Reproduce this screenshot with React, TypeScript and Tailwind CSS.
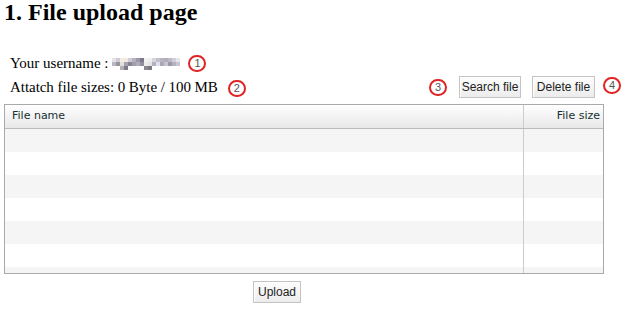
/**
 * FileUploadPage — upload form with attached-file list and numbered callouts.
 */

const BLUR_ROWS: string[][] = [
  ['#e4e2e8', '#cfcbd3', '#f2eee6', '#efe9de', '#cfccd6', '#b4b0bf', '#9c98a9', '#7c7888', '#f2f2f2', '#eeeeee', '#d8d4dc', '#c4c0cb', '#b7b3c0', '#b1adba', '#bfbac5', '#d2cfd8', '#e8e6ec'],
  ['#b8b5be', '#9794a0', '#e6e0d4', '#a6a3b0', '#878393', '#a19eac', '#b0adba', '#918d9c', '#ececec', '#e4e4e4', '#b5b2bd', '#dbe3ec', '#aba7b4', '#c9c5cf', '#9c98a6', '#b5b1bd', '#cac6d0'],
  ['#ffffff', '#ffffff', '#b2afb8', '#7e7b85', '#ffffff', '#ffffff', '#ffffff', '#ffffff', '#8a8791', '#7c7983', '#ffffff', '#ffffff', '#ffffff', '#ffffff', '#ffffff', '#ffffff', '#ffffff'],
];

const ROWS = [0, 1, 2, 3, 4, 5, 6];

function Callout({ n }: { n: number }) {
  return (
    <span className="inline-flex w-[18px] h-[17px] shrink-0 items-center justify-center rounded-full border-2 border-[#e02424] text-[11px] leading-none text-[#555] font-['Liberation_Sans',sans-serif]">
      {n}
    </span>
  );
}

function Btn({ label, className }: { label: string; className?: string }) {
  return (
    <button
      type="button"
      className={
        'h-[22px] border border-[#c4c4c4] bg-gradient-to-b from-[#fdfdfd] to-[#ececec] text-[12px] text-[#222] font-[\'Liberation_Sans\',sans-serif] leading-none shadow-[inset_1px_1px_0_#fff] ' +
        (className ?? '')
      }
    >
      {label}
    </button>
  );
}

function BlurredName() {
  return (
    <span className="inline-flex flex-col">
      {BLUR_ROWS.map((row, r) => (
        <span key={r} className="flex">
          {row.map((c, i) => (
            <span key={i} className="w-[4px] h-[4px]" style={{ backgroundColor: c }} />
          ))}
        </span>
      ))}
    </span>
  );
}

export default function App() {
  return (
    <div className="w-[628px] h-[310px] bg-white overflow-hidden font-['Liberation_Serif',serif] text-black">
      <h2 className="pl-[4px] text-[24px] leading-[24px] font-bold">1. File upload page</h2>

      <div className="mt-[27px] pl-[10px] text-[15px] leading-[24px]">
        <div className="flex items-center h-[24px]">
          <span>Your username :</span>
          <span className="ml-[4px] mt-[1px] flex">
            <BlurredName />
          </span>
          <span className="ml-[8px] flex">
            <Callout n={1} />
          </span>
        </div>

        <div className="flex items-center h-[24px]">
          <span className="tracking-[-0.05px]">Attatch file sizes: 0 Byte / 100 MB</span>
          <span className="ml-[10px] mt-[3px] flex">
            <Callout n={2} />
          </span>
          <div className="ml-auto flex items-center pr-[7px]">
            <Callout n={3} />
            <Btn label="Search file" className="ml-[12px] w-[62px]" />
            <Btn label="Delete file" className="ml-[11px] w-[63px]" />
            <span className="ml-[8px] -mt-[3px] flex">
              <Callout n={4} />
            </span>
          </div>
        </div>
      </div>

      <div className="ml-[4px] mt-[5px] w-[600px] h-[170px] border border-[#aaa] overflow-hidden font-['DejaVu_Sans',sans-serif] text-[11px]">
        <div className="flex h-[24px] border-b border-[#bbb] bg-gradient-to-b from-white to-[#e8e8e8] text-[#16302f]">
          <div className="flex-1 flex items-center pl-[7px] border-r border-[#ccc]">File name</div>
          <div className="w-[79px] flex items-center justify-end pr-[3px]">File size</div>
        </div>
        {ROWS.map((r) => (
          <div key={r} className={'flex h-[23px] ' + (r % 2 === 0 ? 'bg-[#f5f5f5]' : 'bg-white')}>
            <div className="flex-1 border-r border-[#ccc]" />
            <div className="w-[79px]" />
          </div>
        ))}
      </div>

      <div className="pl-[253px] mt-[5px]">
        <Btn label="Upload" className="w-[48px] h-[21px]" />
      </div>
    </div>
  );
}
